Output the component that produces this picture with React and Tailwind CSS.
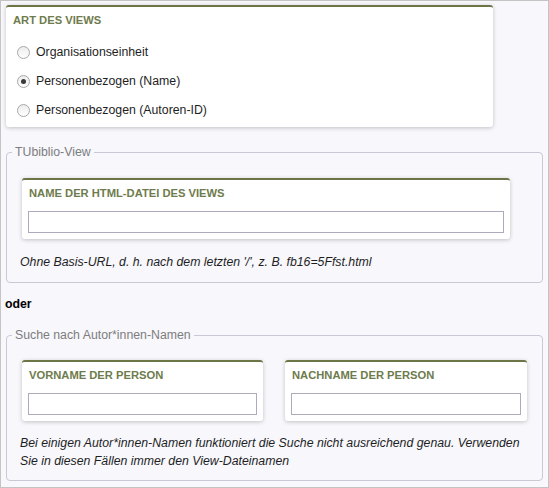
import { useState } from 'react';

const font = "font-['Liberation_Sans',Arial,sans-serif]";

// Small white panel with the olive top rule and a heading
function Panel({ title, className = '', children }) {
  return (
    <div
      className={`rounded-[3px] border-t-2 border-[#6b7546] bg-white shadow-[0_1px_4px_rgba(0,0,0,0.22)] ${className}`}
    >
      <h3 className="pt-[6px] pl-[7px] text-[11.2px] leading-[14px] font-bold uppercase text-[#6e7b4c]">
        {title}
      </h3>
      {children}
    </div>
  );
}

function Radio({ label, checked, onSelect }) {
  return (
    <label className="flex h-[18px] cursor-pointer items-center gap-[6px] pl-[11px]" onClick={onSelect}>
      <span className="flex h-[13px] w-[13px] items-center justify-center rounded-full border border-[#a8a8a8] bg-linear-to-b from-[#ececec] to-white">
        {checked && <span className="h-[5px] w-[5px] rounded-full bg-[#3a3a3a]" />}
      </span>
      <span>{label}</span>
    </label>
  );
}

function TextField() {
  return (
    <input
      type="text"
      className="mx-[6px] mt-[11px] block h-[22px] w-[calc(100%-12px)] border border-[#ababbd] bg-white px-1 outline-none"
    />
  );
}

export default function App() {
  const [kind, setKind] = useState('name');

  const options = [
    { id: 'org', label: 'Organisationseinheit' },
    { id: 'name', label: 'Personenbezogen (Name)' },
    { id: 'id', label: 'Personenbezogen (Autoren-ID)' },
  ];

  return (
    <div
      className={`${font} h-[488px] w-[549px] overflow-hidden border border-[#c4c4c4] bg-[#f7f7fc] text-[12.3px] leading-[18px] text-[#1e1e1e]`}
    >
      {/* Art des Views */}
      <Panel title="Art des Views" className="mt-[4px] ml-[5px] w-[487px] pb-[8px]">
        <div className="mt-[16px] flex flex-col gap-[11px]">
          {options.map((o) => (
            <Radio
              key={o.id}
              label={o.label}
              checked={kind === o.id}
              onSelect={() => setKind(o.id)}
            />
          ))}
        </div>
      </Panel>

      {/* TUbiblio-View */}
      <fieldset className="mx-[5px] mt-[16px] rounded-[4px] border border-[#c9c9d6] px-[5px] pb-[11px]">
        <legend className="px-[3px] text-[#7d7d7d]">TUbiblio-View</legend>
        <Panel title="Name der HTML-Datei des Views" className="mt-[17px] ml-[10px] w-[488px] pb-[6px]">
          <TextField />
        </Panel>
        <p className="mt-[14px] ml-[8px] italic">
          Ohne Basis-URL, d. h. nach dem letzten '/', z. B. fb16=5Ffst.html
        </p>
      </fieldset>

      <p className="mt-[12px] ml-[4px] font-bold text-black">oder</p>

      {/* Suche nach Namen */}
      <fieldset className="mx-[5px] mt-[13px] rounded-[4px] border border-[#c9c9d6] px-[5px] pb-[10px]">
        <legend className="px-[3px] text-[#7d7d7d]">Suche nach Autor*innen-Namen</legend>
        <div className="mt-[16px] ml-[10px] flex gap-[22px]">
          <Panel title="Vorname der Person" className="w-[241px] pb-[6px]">
            <TextField />
          </Panel>
          <Panel title="Nachname der Person" className="w-[242px] pb-[6px]">
            <TextField />
          </Panel>
        </div>
        <p className="mt-[13px] ml-[8px] pr-[6px] italic">
          Bei einigen Autor*innen-Namen funktioniert die Suche nicht ausreichend genau. Verwenden
          Sie in diesen Fällen immer den View-Dateinamen
        </p>
      </fieldset>
    </div>
  );
}
